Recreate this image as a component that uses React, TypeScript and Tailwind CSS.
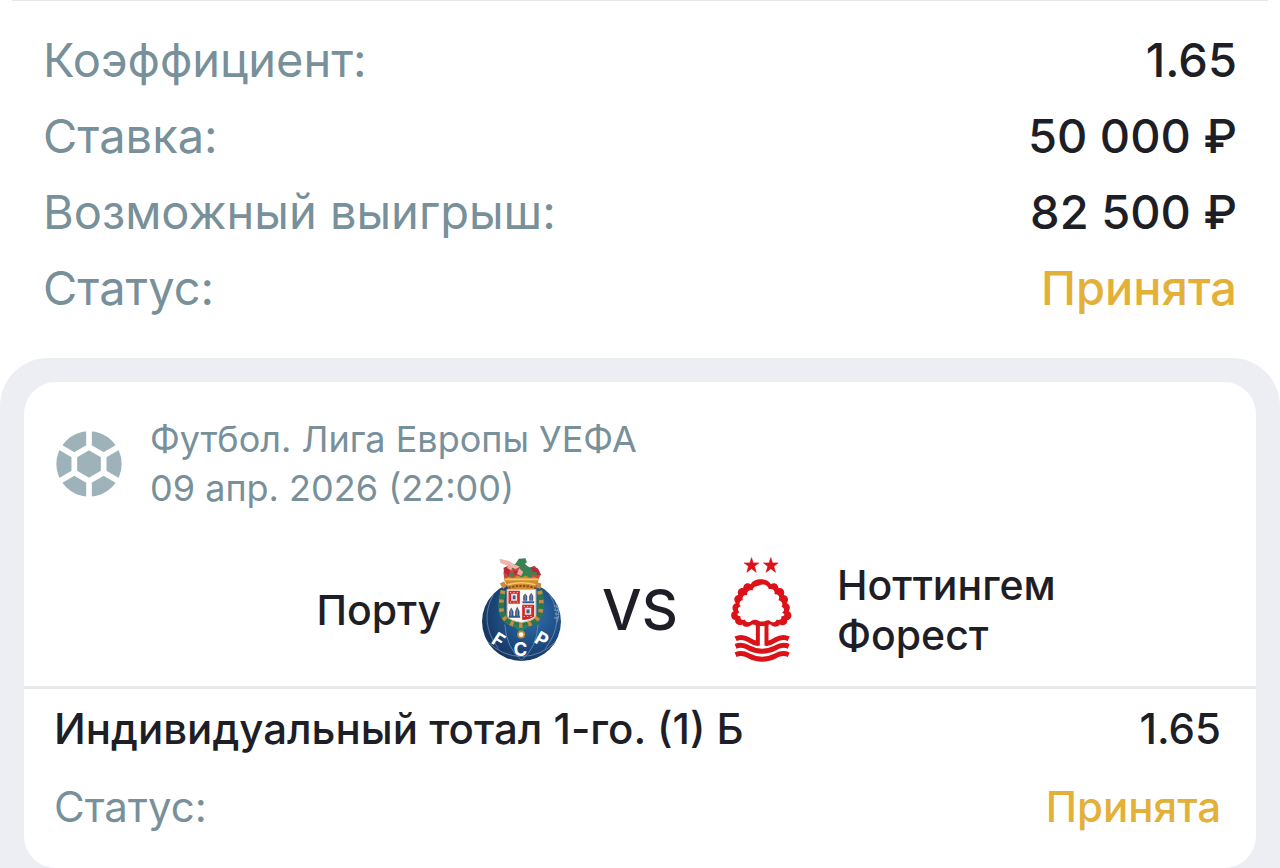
import React from 'react';

interface RowProps {
  label: string;
  value: string;
  accent?: boolean;
}

const SummaryRow: React.FC<RowProps> = ({ label, value, accent }) => (
  <div className="flex items-center justify-between text-[47px] leading-[76px]">
    <dt className="text-[#78909a]">{label}</dt>
    <dd className={accent ? 'font-medium text-[#e3b038]' : 'font-medium text-[#1e1e26]'}>{value}</dd>
  </div>
);

const BallIcon: React.FC = () => (
  <svg viewBox="50 61 198 198" className="size-[66px] shrink-0" aria-hidden="true">
    <circle cx="149" cy="160" r="98" fill="#9eb2b9" />
    <g stroke="#fff" strokeWidth="17" fill="none">
      <path d="M149 109 193 134.500V185.500L149 211 105 185.500V134.500Z" strokeLinejoin="round" />
      <path d="M149 109V55M149 211V265M193 134.500 242 106M193 185.500 242 214M105 134.500 56 106M105 185.500 56 214" />
    </g>
  </svg>
);

const PortoCrest: React.FC = () => (
  <svg viewBox="36 38 242 314" className="h-[105px] w-[81px] shrink-0" role="img" aria-label="FC Porto">
    <defs>
      <radialGradient id="ball" cx="0.62" cy="0.4" r="0.65">
        <stop offset="0" stopColor="#3272a8" />
        <stop offset="0.55" stopColor="#1f5088" />
        <stop offset="1" stopColor="#16345f" />
      </radialGradient>
    </defs>
    <circle cx="157" cy="231" r="118" fill="url(#ball)" />
    <g fill="none" stroke="#7d9fc0" strokeWidth="2">
      <path d="M73 150Q28 232 88 312M241 150Q290 232 228 312M107 240Q112 310 157 347M207 240Q202 310 157 347M56 291Q98 334 157 336Q216 334 260 291" />
      <path d="M262 180Q274 205 262 234M254 184l12 4M255 196l14 3M257 208l13 2M255 220l12 1" strokeWidth="4" strokeDasharray="5 2" />
    </g>
    {/* laurel around the shield */}
    <path d="M102 138C91 190 90 238 155 243C221 238 222 190 211 138" fill="none" stroke="#2c7550" strokeWidth="18" />
    <path d="M102 138C91 190 90 238 155 243C221 238 222 190 211 138" fill="none" stroke="#c98a45" strokeWidth="14" strokeDasharray="10 17" />
    <path d="M136 242 155 259 174 242" fill="none" stroke="#2d8063" strokeWidth="7" />
    <circle cx="156" cy="270" r="12" fill="#b98d3b" />
    <circle cx="156" cy="270" r="7" fill="#fff7dc" />
    {/* dragon and crown */}
    <path d="M103 84 107 70 118 63 127 72 143 60 158 49 170 61 178 71 196 64 208 76 214 92 206 108H106Z" fill="#c8493f" />
    <path d="M126 66 139 58 149 43 169 42 173 54 166 60 190 74 186 99H146L157 75 142 67 130 74Z" fill="#388350" />
    <path d="M91 43 120 50 135 60 152 67 139 74 118 65 94 56Z" fill="#efb5ae" />
    <path d="M103 70 116 66 124 77 118 95 105 84ZM184 68 205 72 216 92 195 91ZM132 77 146 82 137 94Z" fill="#b72a38" />
    <path d="M118 57 130 68 126 78 114 71ZM150 72 162 83 156 95 144 88Z" fill="#f0aaa2" />
    <path d="M121 85h12v11h-12zM190 83h12v9h-12z" fill="#2d8955" />
    <path d="M105 106 118 97 132 101 146 93 157 99 169 93 182 101 196 97 209 106 197 134H118Z" fill="#d28b2d" />
    <path d="M106 105 208 105M115 121Q157 109 199 121" stroke="#f5c869" strokeWidth="5" fill="none" />
    <path d="M118 130Q157 119 198 130" fill="none" stroke="#8b4d24" strokeWidth="6" strokeDasharray="7 4" />
    <path d="M92 117l13-6 8 14-11 9zM203 113l13 4-2 17-13-4z" fill="#c58a40" />
    {/* quartered shield */}
    <path d="M114 135H200V212Q198 228 157 234Q116 228 114 212Z" fill="#fff8f1" stroke="#d8bd8a" strokeWidth="3" />
    <g fill="#cf292f">
      <path d="M118 139H152V178H118ZM159 181H195V217Q178 228 159 226Z" />
    </g>
    <g fill="#f7dfd9">
      <path d="M126 148H144V169H126ZM167 190H186V211H167Z" />
    </g>
    <path d="M131 153h8v11h-8zM172 195h9v11h-9z" fill="#365a98" />
    <path d="M123 144h24M123 173h24M164 186h25M164 216h25" stroke="#f9d9ca" strokeWidth="3" strokeDasharray="3 7" />
    <g fill="#305b92">
      <path d="M162 169V155L168 147 174 155V169ZM180 169V155L186 145 192 155V169ZM120 215V202L126 189 133 201V215ZM138 217V200L144 186 151 200V217Z" />
      <path d="M160 170h35v6h-35zM119 214h34v6h-34z" />
    </g>
    <path d="M168 151v18M186 151v18M126 195v19M144 195v19" stroke="#d77469" strokeWidth="3" />
    <g fill="#fff" className="font-[Inter] text-[56px] font-bold" textAnchor="middle">
      <text x="88" y="306" transform="rotate(33 88 286)">F</text>
      <text x="154" y="333">C</text>
      <text x="218" y="304" transform="rotate(30 218 284)">P</text>
    </g>
  </svg>
);

const ForestCrest: React.FC = () => (
  <svg viewBox="60 36 188 316" className="h-[105px] w-[63px] shrink-0" role="img" aria-label="Nottingham Forest">
    <g fill="#dc1219">
      <g stroke="#dc1219" strokeWidth="2">
        <path d="M124 38 129 54H146L133 64 138 82 124 71 110 82 115 64 102 54H119Z" />
        <path d="M182 38 187 54H204L191 64 196 82 182 71 168 82 173 64 160 54H177Z" />
      </g>
      <path d="M149 244C136 242 132 238 126 239C115 249 101 248 96 239C85 245 72 234 75 226C60 224 59 203 70 199C63 190 67 177 77 175C68 165 72 151 84 150C79 139 88 127 99 130C99 117 112 111 122 118C129 98 174 98 182 118C194 111 205 119 205 130C217 127 226 138 221 150C233 151 238 165 230 175C240 178 242 190 236 199C248 204 247 224 231 226C235 236 220 246 209 239C203 248 190 248 181 239C174 238 170 242 163 244Z" />
    </g>
    <path d="M149 230C140 224 130 224 124 228C116 236 106 232 104 224C96 228 88 222 91 214C80 213 78 207 88 202C80 195 82 187 92 184C84 177 88 167 98 166C94 155 102 148 111 151C109 139 117 134 127 137C130 122 142 125 147 122C157 115 174 119 176 133C188 129 196 137 193 148C205 146 211 156 205 166C216 168 220 178 214 185C224 190 224 198 216 204C227 208 224 214 214 214C216 223 207 228 200 224C196 234 186 235 179 228C172 224 164 229 163 230Z" fill="#fff" />
    <path d="M137 231h12v72q-8-1-15-4 3-2 3-9ZM163 231h12v58q0 7 4 10-8 3-16 4Z" fill="#dc1219" />
    <g fill="none" stroke="#dc1219" strokeWidth="15">
      <path d="M76 282Q95 273 115 285Q128 294 146 297M236 282Q217 273 197 285Q184 294 166 297" />
      <path d="M76 305Q95 297 115 309Q156 330 197 309Q217 297 236 305" />
      <path d="M76 330Q95 322 115 333Q156 354 197 333Q217 322 236 330" />
    </g>
  </svg>
);

export default function App() {
  return (
    <main className="bg-white font-[Inter,sans-serif] text-[#1e1e26]">
      <hr className="mx-3 border-[#e8e8ea]" />
      <dl className="px-[43px] pt-[21px] pb-8">
        <SummaryRow label="Коэффициент:" value="1.65" />
        <SummaryRow label="Ставка:" value="50 000 ₽" />
        <SummaryRow label="Возможный выигрыш:" value="82 500 ₽" />
        <SummaryRow label="Статус:" value="Принята" accent />
      </dl>

      <section className="rounded-t-[48px] bg-[#edeef3] px-6 pt-6">
        <article className="rounded-[32px] bg-white">
          <header className="flex items-center gap-7 px-8 pt-[33px]">
            <BallIcon />
            <div className="text-[36px] leading-[49px] text-[#78909a]">
              <h2>Футбол. Лига Европы УЕФА</h2>
              <time dateTime="2026-04-09T22:00" className="block">09 апр. 2026 (22:00)</time>
            </div>
          </header>

          <div className="grid grid-cols-[1fr_auto_1fr] items-center gap-x-10 px-8 pt-11 pb-6 text-[41px] leading-[50px] font-medium">
            <div className="flex items-center justify-end gap-10">
              <span>Порту</span>
              <PortoCrest />
            </div>
            <span className="text-[56px]">VS</span>
            <div className="flex items-center gap-11 pl-3">
              <ForestCrest />
              <span className="w-60">Ноттингем Форест</span>
            </div>
          </div>

          <dl className="border-t-[3px] border-[#e8e8ea] pt-px pr-[35px] pb-[22px] pl-[30px] text-[42px] leading-[78px] font-medium">
            <div className="flex justify-between">
              <dt>Индивидуальный тотал 1-го. (1) Б</dt>
              <dd>1.65</dd>
            </div>
            <div className="flex justify-between">
              <dt className="font-normal text-[#78909a]">Статус:</dt>
              <dd className="text-[#e3b038]">Принята</dd>
            </div>
          </dl>
        </article>
      </section>
    </main>
  );
}
